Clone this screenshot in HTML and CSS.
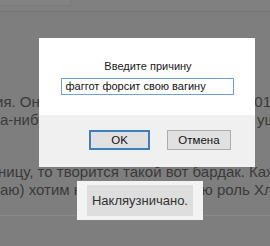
FILE: index.html
```html
<!DOCTYPE html>
<html lang="ru">
<head>
<meta charset="utf-8">
<link rel="stylesheet" href="styles.css">
</head>
<body>
<div class="page">
  <div class="topbar"><div class="tab"></div></div>
  <div class="content">
    <div class="para first">
      <div class="line"><span class="left shift">ия. Она</span><span class="right r1">2013</span></div>
      <div class="line"><span class="left">а-нибудь</span><span class="right r1b">уш</span></div>
    </div>
    <div class="para second">
      <div class="line"><span class="left shift2">ницу, то творится такой вот бардак. Каждый</span></div>
      <div class="line"><span class="left">аю) хотим на</span><span class="right r2">ую роль Хлопа</span></div>
    </div>
  </div>
  <div class="bottomline"></div>
</div>

<div class="dialog">
  <div class="dialog-body">
    <div class="prompt">Введите причину</div>
    <div class="input">фаггот форсит свою вагину</div>
  </div>
  <div class="dialog-footer">
    <button class="btn ok">OK</button>
    <button class="btn">Отмена</button>
  </div>
</div>

<div class="toast"><div class="toast-inner">Накляузничано.</div></div>
</body>
</html>
```

FILE: styles.css
```css
html, body {
  margin: 0;
  padding: 0;
}
body {
  width: 270px;
  height: 246px;
  overflow: hidden;
  background: #7e7e7e;
  position: relative;
  font-family: "Liberation Sans", Arial, sans-serif;
}
.page {
  width: 270px;
  height: 246px;
  display: flex;
  flex-direction: column;
}
.topbar {
  height: 11px;
  border-bottom: 1px solid #777777;
  background: #808080;
}
.tab {
  width: 70px;
  height: 5px;
  background: #838383;
  border-right: 1px solid #7a7a7a;
  border-bottom: 1px solid #7a7a7a;
}
.content {
  padding-top: 81px;
  color: #3a3a3a;
  font-size: 15px;
  line-height: 18px;
}
.para.second {
  margin-top: 34px;
}
.line {
  display: flex;
  white-space: nowrap;
  overflow: hidden;
  width: 270px;
}
.left {
  flex: 1;
}
.shift {
  margin-left: -5px;
}
.shift2 {
  margin-left: -2px;
}
.right.r1 {
  width: 24px;
  flex: none;
}
.right.r1b {
  width: 13px;
  flex: none;
}
.right.r2 {
  width: 76px;
  flex: none;
}
.bottomline {
  margin-top: 16px;
  height: 1px;
  background: #8a8a8a;
}

.dialog {
  position: absolute;
  left: 39px;
  top: 38px;
  width: 216px;
  height: 129px;
  display: flex;
  flex-direction: column;
  background: #ffffff;
  font-family: "Liberation Sans", Arial, sans-serif;
  font-size: 11px;
  color: #000;
}
.dialog-body {
  height: 77px;
  display: flex;
  flex-direction: column;
  align-items: center;
  padding-top: 21px;
  box-sizing: border-box;
}
.prompt {
  line-height: 14px;
  height: 14px;
  color: #1a1a1a;
  margin-left: 2px;
}
.input {
  margin-top: 5px;
  width: 173px;
  height: 17px;
  box-sizing: border-box;
  border: 1px solid #6fa0d8;
  padding-left: 4px;
  line-height: 15px;
  text-align: left;
  color: #111;
}
.dialog-footer {
  flex: 1;
  background: #f0f0f0;
  display: flex;
  justify-content: center;
  align-items: flex-start;
  padding-top: 15px;
  gap: 17px;
  padding-left: 26px;
  box-sizing: border-box;
}
.btn {
  width: 64px;
  height: 20px;
  box-sizing: border-box;
  border: 1px solid #adadad;
  background: #e1e1e1;
  font-family: "Liberation Sans", Arial, sans-serif;
  font-size: 11.5px;
  color: #111;
  padding: 0;
  margin: 0;
}
.btn.ok {
  border: 2px solid #3b7fc0;
  width: 61px;
}

.toast {
  position: absolute;
  left: 77px;
  top: 181px;
  width: 126px;
  height: 39px;
  box-sizing: border-box;
  background: #f3f3f3;
  padding: 4px 10px;
  display: flex;
}
.toast-inner {
  flex: 1;
  background: #dedede;
  color: #333;
  font-size: 13px;
  display: flex;
  align-items: center;
  justify-content: center;
  padding-bottom: 1px;
}
```
